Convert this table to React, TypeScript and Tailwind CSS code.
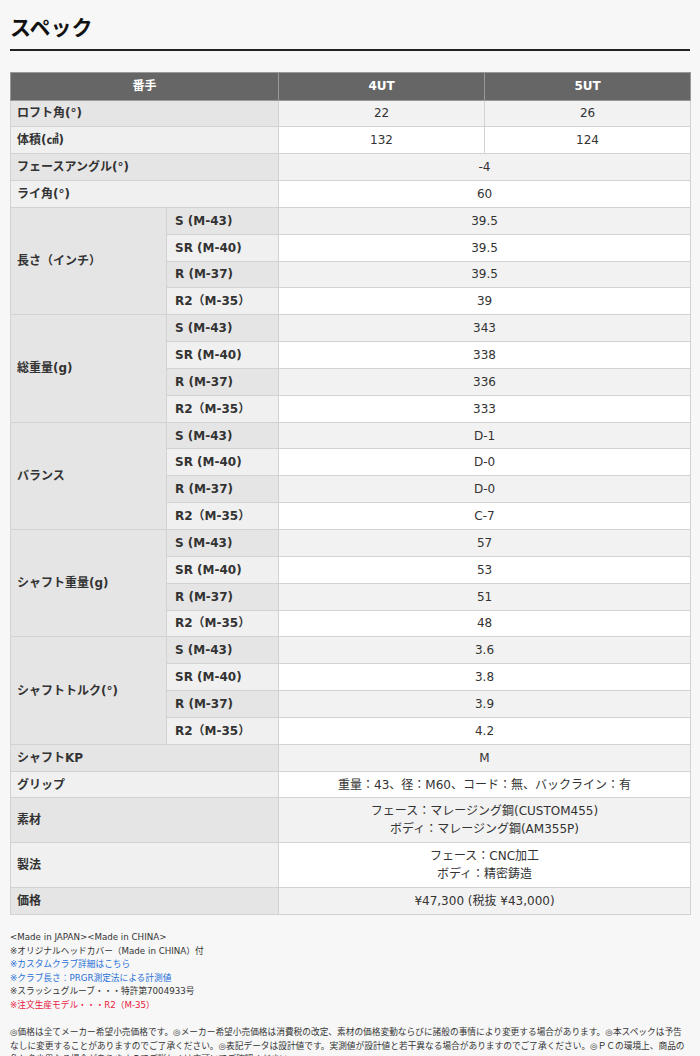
import type { ReactNode } from "react";

type Group = { label: string; values: string[] };

const subs = ["S (M-43)", "SR (M-40)", "R (M-37)", "R2（M-35）"];

const groups: Group[] = [
  { label: "長さ（インチ）", values: ["39.5", "39.5", "39.5", "39"] },
  { label: "総重量(g)", values: ["343", "338", "336", "333"] },
  { label: "バランス", values: ["D-1", "D-0", "D-0", "C-7"] },
  { label: "シャフト重量(g)", values: ["57", "53", "51", "48"] },
  { label: "シャフトトルク(°)", values: ["3.6", "3.8", "3.9", "4.2"] },
];

const font = "font-['DejaVu_Sans','Noto_Sans_CJK_JP',sans-serif]";

function labelBg(i: number) {
  return i % 2 === 1 ? "bg-[#e5e5e5]" : "bg-[#f0f0f0]";
}

function valueBg(i: number) {
  return i % 2 === 1 ? "bg-[#f2f2f2]" : "bg-white";
}

function Label({ i, children, colSpan, rowSpan }: { i: number; children: ReactNode; colSpan?: number; rowSpan?: number }) {
  return (
    <td
      colSpan={colSpan}
      rowSpan={rowSpan}
      className={`h-[26.85px] border border-[#d2d2d2] px-[6px] py-0 text-left font-bold text-[#333] ${labelBg(i)}`}
    >
      {children}
    </td>
  );
}

function Value({ i, children, colSpan }: { i: number; children: ReactNode; colSpan?: number }) {
  return (
    <td colSpan={colSpan} className={`h-[26.85px] border border-[#d2d2d2] px-2 py-0 text-center text-[#333] ${valueBg(i)}`}>
      {children}
    </td>
  );
}

export default function App() {
  let r = 5;
  return (
    <div className={`min-h-[1056px] bg-[#f7f7f7] px-[10px] pt-[14px] ${font}`}>
      <h1 className="border-b-2 border-[#222] pb-[7px] text-[21px] font-bold leading-[28px] text-[#111]">スペック</h1>

      <table className="mt-[21px] w-full table-fixed border-collapse text-[12px] leading-[18px]">
        <colgroup>
          <col className="w-[156px]" />
          <col className="w-[112px]" />
          <col className="w-[206px]" />
          <col className="w-[206px]" />
        </colgroup>
        <thead>
          <tr>
            <th colSpan={2} className="h-[27.5px] border border-[#999] bg-[#666] font-bold text-white">番手</th>
            <th className="h-[27.5px] border border-[#999] bg-[#666] font-bold text-white">4UT</th>
            <th className="h-[27.5px] border border-[#999] bg-[#666] font-bold text-white">5UT</th>
          </tr>
        </thead>
        <tbody>
          <tr>
            <Label i={1} colSpan={2}>ロフト角(°)</Label>
            <Value i={1}>22</Value>
            <Value i={1}>26</Value>
          </tr>
          <tr>
            <Label i={2} colSpan={2}>体積(㎤)</Label>
            <Value i={2}>132</Value>
            <Value i={2}>124</Value>
          </tr>
          <tr>
            <Label i={3} colSpan={2}>フェースアングル(°)</Label>
            <Value i={3} colSpan={2}>-4</Value>
          </tr>
          <tr>
            <Label i={4} colSpan={2}>ライ角(°)</Label>
            <Value i={4} colSpan={2}>60</Value>
          </tr>
          {groups.map((g) =>
            subs.map((s, k) => {
              const i = r++;
              return (
                <tr key={g.label + s}>
                  {k === 0 ? (
                    <Label i={i} rowSpan={4}>
                      {g.label}
                    </Label>
                  ) : null}
                  <td className={`h-[26.85px] border border-[#d2d2d2] px-[8px] py-0 text-left font-bold text-[#333] ${labelBg(i)}`}>{s}</td>
                  <Value i={i} colSpan={2}>{g.values[k]}</Value>
                </tr>
              );
            })
          )}
          <tr>
            <Label i={25} colSpan={2}>シャフトKP</Label>
            <Value i={25} colSpan={2}>M</Value>
          </tr>
          <tr>
            <Label i={26} colSpan={2}>グリップ</Label>
            <Value i={26} colSpan={2}>重量：43、径：M60、コード：無、バックライン：有</Value>
          </tr>
          <tr>
            <td colSpan={2} className={`h-[45px] border border-[#d2d2d2] px-[6px] text-left font-bold text-[#333] ${labelBg(27)}`}>素材</td>
            <td colSpan={2} className={`h-[45px] border border-[#d2d2d2] px-2 text-center text-[#333] ${valueBg(27)}`}>
              フェース：マレージング鋼(CUSTOM455)
              <br />
              ボディ：マレージング鋼(AM355P)
            </td>
          </tr>
          <tr>
            <td colSpan={2} className={`h-[45px] border border-[#d2d2d2] px-[6px] text-left font-bold text-[#333] ${labelBg(28)}`}>製法</td>
            <td colSpan={2} className={`h-[45px] border border-[#d2d2d2] px-2 text-center text-[#333] ${valueBg(28)}`}>
              フェース：CNC加工
              <br />
              ボディ：精密鋳造
            </td>
          </tr>
          <tr>
            <Label i={29} colSpan={2}>価格</Label>
            <Value i={29} colSpan={2}>¥47,300 (税抜 ¥43,000)</Value>
          </tr>
        </tbody>
      </table>

      <div className="mt-[16px] text-[8.7px] leading-[13.5px] text-[#333]">
        <p>&lt;Made in JAPAN&gt;&lt;Made in CHINA&gt;</p>
        <p>※オリジナルヘッドカバー（Made in CHINA）付</p>
        <p className="text-[#1f6fd6]">※カスタムクラブ詳細はこちら</p>
        <p className="text-[#1f6fd6]">※クラブ長さ：PRGR測定法による計測値</p>
        <p>※スラッシュグルーブ・・・特許第7004933号</p>
        <p className="text-[#e8173f]">※注文生産モデル・・・R2（M-35）</p>
        <p className="mt-[14px]">
          ◎価格は全てメーカー希望小売価格です。◎メーカー希望小売価格は消費税の改定、素材の価格変動ならびに諸般の事情により変更する場合があります。◎本スペックは予告なしに変更することがありますのでご了承ください。◎表記データは設計値です。実測値が設計値と若干異なる場合がありますのでご了承ください。◎ＰＣの環境上、商品の色と多少異なる場合がありますのでご詳しくは店頭にてご確認ください。
        </p>
      </div>
    </div>
  );
}
